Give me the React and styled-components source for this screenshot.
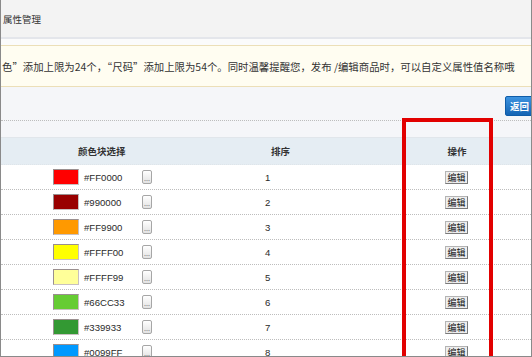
import React from "react";
import styled, { createGlobalStyle } from "styled-components";

const Global = createGlobalStyle`
  html, body { margin: 0; padding: 0; background: #fff; }
  body { font-family: "Liberation Sans", "Noto Sans CJK SC", sans-serif; }
`;

const Frame = styled.div`
  position: relative;
  width: 532px;
  height: 357px;
  box-sizing: border-box;
  border: 1px solid #8a8a8a;
  border-top: none;
  background: #f5f6f9;
  overflow: hidden;
  display: flex;
  flex-direction: column;
`;

const TopBar = styled.div`
  height: 37px;
  flex-shrink: 0;
  background: #f3f3f3;
  border-bottom: 2px solid #e4e6eb;
  display: flex;
  align-items: center;
  padding-left: 2px;
  font-family: "Noto Sans CJK SC", sans-serif;
  font-size: 9.5px;
  color: #333;
`;

const Gap = styled.div`
  height: 6px;
  flex-shrink: 0;
  background: #fbfbfb;
`;

const Notice = styled.div`
  height: 40px;
  flex-shrink: 0;
  background: #fffdf1;
  border-top: 1px solid #ecdfb8;
  border-bottom: 1px solid #ecdfb8;
  display: flex;
  align-items: center;
  white-space: nowrap;
  overflow: hidden;
  padding-left: 1px;
  font-family: "Noto Sans CJK SC", sans-serif;
  font-size: 10.4px;
  color: #333;
`;

const Toolbar = styled.div`
  height: 33px;
  flex-shrink: 0;
  display: flex;
  justify-content: flex-end;
  align-items: flex-start;
`;

const BackButton = styled.button`
  margin: 9px -14px 0 0;
  width: 40px;
  height: 20px;
  padding: 0 0 0 4px;
  text-align: left;
  border: 1px solid #0f5ca8;
  border-radius: 2px;
  background: linear-gradient(#3d93e0, #1464b4);
  color: #fff;
  font-family: "Noto Sans CJK SC", sans-serif;
  font-weight: bold;
  font-size: 9.5px;
`;

const TableWrap = styled.div`
  border-top: 1px dotted #bdbdbd;
  padding-top: 16px;
  flex: 1;
`;

const Row = styled.div`
  display: grid;
  grid-template-columns: 264px 137px 110px 1fr;
  align-items: center;
  height: ${(p) => (p.$head ? "26px" : "24px")};
  background: ${(p) => (p.$head ? "#e5edf3" : "#fff")};
  border-bottom: 1px dotted ${(p) => (p.$head ? "#dfe5ea" : "#bdbdbd")};
  ${(p) => p.$head && "border-top: 1px solid #e1e6eb;"}
`;

const HeadCell = styled.div`
  font-family: "Noto Sans CJK SC", sans-serif;
  font-weight: bold;
  font-size: 9.5px;
  color: #333;
  padding-left: ${(p) => p.$pad || 0}px;
  text-align: ${(p) => p.$align || "left"};
`;

const ColorCell = styled.div`
  display: flex;
  align-items: center;
  padding-left: 52px;
`;

const Swatch = styled.div`
  width: 26px;
  height: 16px;
  box-sizing: border-box;
  border: 1px solid #9a8f8f;
  border-right-color: #c8c0c0;
  border-bottom-color: #c8c0c0;
  background: ${(p) => p.$c};
`;

const Hex = styled.span`
  width: 58px;
  margin-left: 5px;
  font-size: 9.6px;
  color: #2a2a2a;
`;

const DotsButton = styled.div`
  width: 10px;
  height: 14px;
  box-sizing: border-box;
  border: 1px solid #a6a6a6;
  border-radius: 2px;
  background: linear-gradient(#ffffff, #e2e2e2);
  font-size: 7px;
  line-height: 16px;
  text-align: center;
  color: #444;
  overflow: hidden;
`;

const Num = styled.div`
  font-size: 9.6px;
  color: #2a2a2a;
`;

const ActionCell = styled.div`
  display: flex;
  justify-content: center;
  padding-right: 1px;
`;

const EditButton = styled.div`
  height: 13px;
  padding: 0 1px;
  box-sizing: border-box;
  border: 1px solid #7a7a7a;
  border-top-color: #b4b4b4;
  border-left-color: #b4b4b4;
  background: #eeeeee;
  font-family: "Noto Sans CJK SC", sans-serif;
  font-size: 9px;
  line-height: 11px;
  color: #111;
`;

const Highlight = styled.div`
  position: absolute;
  left: 401px;
  top: 118px;
  width: 91px;
  height: 260px;
  box-sizing: border-box;
  border: 4px solid #e20000;
  pointer-events: none;
`;

const colors = ["#FF0000", "#990000", "#FF9900", "#FFFF00", "#FFFF99", "#66CC33", "#339933", "#0099FF"];

export default function App() {
  return (
    <>
      <Global />
      <Frame>
        <TopBar>属性管理</TopBar>
        <Gap />
        <Notice>
          色”添加上限为24个，“尺码”添加上限为54个。同时温馨提醒您，发布 /编辑商品时，可以自定义属性值名称哦
        </Notice>
        <Toolbar>
          <BackButton>返回</BackButton>
        </Toolbar>
        <TableWrap>
          <Row $head>
            <HeadCell $pad={77}>颜色块选择</HeadCell>
            <HeadCell $pad={6}>排序</HeadCell>
            <HeadCell $align="center">操作</HeadCell>
            <div />
          </Row>
          {colors.map((c, i) => (
            <Row key={c}>
              <ColorCell>
                <Swatch $c={c} />
                <Hex>{c}</Hex>
                <DotsButton>...</DotsButton>
              </ColorCell>
              <Num>{i + 1}</Num>
              <ActionCell>
                <EditButton>编辑</EditButton>
              </ActionCell>
              <div />
            </Row>
          ))}
        </TableWrap>
        <Highlight />
      </Frame>
    </>
  );
}
